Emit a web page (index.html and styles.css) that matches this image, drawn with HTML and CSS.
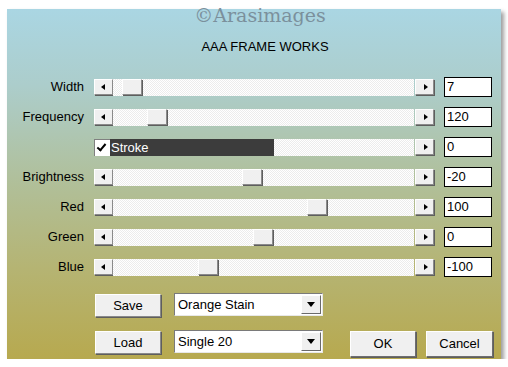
FILE: index.html
```html
<!DOCTYPE html>
<html>
<head>
<meta charset="utf-8">
<link rel="stylesheet" href="styles.css">
</head>
<body>
<div class="panel">
  <div class="watermark">©Arasimages</div>
  <div class="title">AAA FRAME WORKS</div>
  <div class="rows">
    <div class="label">Width</div>
    <div class="scroll"><span class="arrow left"></span><span class="track"><span class="thumb" style="left:9px"></span></span><span class="arrow right"></span></div>
    <div class="value">7</div>

    <div class="label">Frequency</div>
    <div class="scroll"><span class="arrow left"></span><span class="track"><span class="thumb" style="left:34px"></span></span><span class="arrow right"></span></div>
    <div class="value">120</div>

    <div class="label"></div>
    <div class="scroll"><span class="check"></span><span class="track"><span class="fill">Stroke</span></span><span class="arrow right"></span></div>
    <div class="value">0</div>

    <div class="label">Brightness</div>
    <div class="scroll"><span class="arrow left"></span><span class="track"><span class="thumb" style="left:129px"></span></span><span class="arrow right"></span></div>
    <div class="value">-20</div>

    <div class="label">Red</div>
    <div class="scroll"><span class="arrow left"></span><span class="track"><span class="thumb" style="left:194px"></span></span><span class="arrow right"></span></div>
    <div class="value">100</div>

    <div class="label">Green</div>
    <div class="scroll"><span class="arrow left"></span><span class="track"><span class="thumb" style="left:140px"></span></span><span class="arrow right"></span></div>
    <div class="value">0</div>

    <div class="label">Blue</div>
    <div class="scroll"><span class="arrow left"></span><span class="track"><span class="thumb" style="left:85px"></span></span><span class="arrow right"></span></div>
    <div class="value">-100</div>
  </div>
  <div class="bottom">
    <div class="brow first">
      <div class="btn small">Save</div>
      <div class="combo"><span class="ctext">Orange Stain</span><span class="drop"></span></div>
    </div>
    <div class="brow second">
      <div class="btn small">Load</div>
      <div class="combo"><span class="ctext">Single 20</span><span class="drop"></span></div>
      <div class="btn big ok">OK</div>
      <div class="btn big cancel">Cancel</div>
    </div>
  </div>
</div>
</body>
</html>
```
FILE: styles.css
```css
html, body {
  margin: 0;
  padding: 0;
  background: #ffffff;
}
body {
  padding: 9px 0 0 7px;
  font-family: "Liberation Sans", Arial, sans-serif;
  font-size: 13px;
  color: #000;
}
.panel {
  position: relative;
  box-sizing: border-box;
  width: 494px;
  height: 350px;
  padding-top: 30px;
  background: linear-gradient(#aad6e3 0%, #accdcb 22%, #b0c09c 48%, #b5b473 74%, #b7a94f 100%);
  box-shadow: 3px 3px 4px rgba(0, 0, 0, 0.38);
}
.watermark {
  position: absolute;
  top: -5px;
  left: 0;
  right: 0;
  text-align: center;
  padding-left: 12px;
  font-family: "DejaVu Serif", serif;
  font-size: 19px;
  line-height: 22px;
  color: #7b909c;
}
.title {
  line-height: 15px;
  text-align: center;
  padding-left: 22px;
}
.rows {
  margin-top: 23px;
  display: grid;
  grid-template-columns: 77px 340px 48px;
  column-gap: 10px;
  row-gap: 10px;
  grid-auto-rows: 20px;
}
.label {
  text-align: right;
  line-height: 20px;
}
.scroll {
  margin-top: 2px;
  height: 17px;
  display: flex;
}
.arrow, .thumb, .drop, .btn {
  box-sizing: border-box;
  background: #f0f0f0;
  border-top: 1px solid #ffffff;
  border-left: 1px solid #ffffff;
  border-right: 1px solid #8a8a8a;
  border-bottom: 1px solid #8a8a8a;
  box-shadow: 1px 1px 0 #5e5e5e;
}
.arrow {
  position: relative;
  width: 19px;
  height: 16px;
  flex: none;
}
.arrow::after {
  content: "";
  position: absolute;
  top: 4px;
  width: 0;
  height: 0;
  border-top: 3.5px solid transparent;
  border-bottom: 3.5px solid transparent;
}
.arrow.left::after {
  left: 6px;
  border-right: 4px solid #000;
}
.arrow.right::after {
  left: 8px;
  border-left: 4px solid #000;
}
.track {
  position: relative;
  flex: 1;
  margin-right: 1px;
  background: repeating-conic-gradient(#ffffff 0 25%, #ececec 0 50%) 0 0 / 2px 2px;
}
.thumb {
  position: absolute;
  top: 0;
  width: 20px;
  height: 16px;
}
.check {
  box-sizing: border-box;
  width: 16px;
  height: 17px;
  flex: none;
  background: #fff;
  border-top: 1px solid #808080;
  border-left: 1px solid #808080;
  position: relative;
}
.check::after {
  content: "";
  position: absolute;
  left: 4px;
  top: 2px;
  width: 3px;
  height: 7px;
  border-right: 2px solid #000;
  border-bottom: 2px solid #000;
  transform: rotate(40deg);
}
.fill {
  display: block;
  width: 164px;
  height: 17px;
  background: #3c3c3c;
  color: #fff;
  line-height: 17px;
  padding-left: 1px;
  box-sizing: border-box;
}
.value {
  box-sizing: border-box;
  height: 20px;
  border: 1px solid #000;
  background: #fff;
  line-height: 18px;
  padding-left: 2px;
}
.bottom {
  margin-top: 16px;
  padding-left: 88px;
}
.brow {
  display: flex;
  align-items: flex-start;
}
.brow.second {
  margin-top: 13px;
}
.btn {
  text-align: center;
  flex: none;
  margin-top: 1px;
}
.btn.small {
  width: 66px;
  height: 23px;
  line-height: 21px;
  margin-right: 13px;
}
.btn.big {
  height: 26px;
  line-height: 24px;
  border-right-color: #6e6e6e;
  border-bottom-color: #6e6e6e;
}
.btn.ok {
  width: 66px;
  margin-left: 27px;
}
.btn.cancel {
  width: 67px;
  margin-left: 10px;
}
.combo {
  box-sizing: border-box;
  width: 149px;
  height: 23px;
  background: #fff;
  border-top: 1px solid #7a7a7a;
  border-left: 1px solid #7a7a7a;
  border-right: 1px solid #e8e8e8;
  border-bottom: 1px solid #e8e8e8;
  display: flex;
  align-items: center;
  padding: 1px 1px 1px 3px;
  flex: none;
}
.ctext {
  flex: 1;
}
.drop {
  position: relative;
  width: 20px;
  height: 19px;
  box-shadow: none;
  border-right-color: #6a6a6a;
  border-bottom-color: #6a6a6a;
}
.drop::after {
  content: "";
  position: absolute;
  left: 5px;
  top: 6px;
  border-left: 4.5px solid transparent;
  border-right: 4.5px solid transparent;
  border-top: 5px solid #000;
}
```
